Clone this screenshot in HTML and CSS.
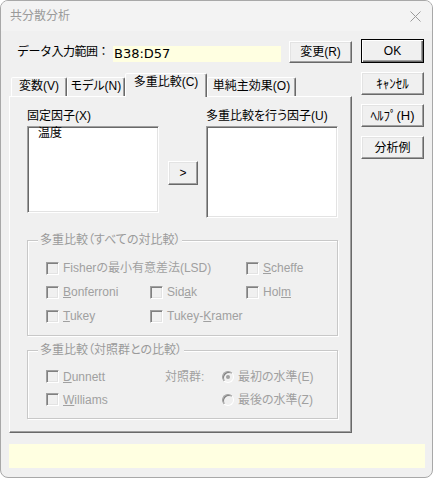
FILE: index.html
```html
<!DOCTYPE html>
<html lang="ja">
<head>
<meta charset="utf-8">
<title>共分散分析</title>
<link rel="stylesheet" href="styles.css">
</head>
<body>
<div class="window">
  <div class="titlebar">
    <span class="title">共分散分析</span>
    <svg class="close" width="11" height="11" viewBox="0 0 11 11"><path d="M0.5 0.5L10.5 10.5M10.5 0.5L0.5 10.5" stroke="#9a9a9a" stroke-width="1"/></svg>
  </div>
  <div class="client">
    <div class="main">
      <div class="datarow">
        <span class="datalabel">データ入力範囲：</span>
        <span class="range">B38:D57</span>
        <button class="btn btn-change">変更(R)</button>
      </div>
      <div class="tabs">
        <div class="tab t1">変数(V)</div>
        <div class="tab t2">モデル(N)</div>
        <div class="tab t3 active">多重比較(C)</div>
        <div class="tab t4">単純主効果(O)</div>
      </div>
      <div class="panel">
        <div class="lists">
          <div class="col">
            <div class="lbl">固定因子(X)</div>
            <div class="listbox lb1"><div class="item">温度</div></div>
          </div>
          <div class="mid"><button class="btn btn-arrow">&gt;</button></div>
          <div class="col">
            <div class="lbl">多重比較を行う因子(U)</div>
            <div class="listbox lb2"></div>
          </div>
        </div>
        <fieldset class="grp grp1">
          <legend>多重比較（すべての対比較）</legend>
          <div class="opts opts1">
            <label class="chk span2"><span class="box"></span><span>Fisherの最小有意差法(LSD)</span></label>
            <label class="chk"><span class="box"></span><span><u>S</u>cheffe</span></label>
            <label class="chk"><span class="box"></span><span><u>B</u>onferroni</span></label>
            <label class="chk"><span class="box"></span><span>Sid<u>a</u>k</span></label>
            <label class="chk"><span class="box"></span><span>Hol<u>m</u></span></label>
            <label class="chk"><span class="box"></span><span><u>T</u>ukey</span></label>
            <label class="chk span2"><span class="box"></span><span>Tukey-<u>K</u>ramer</span></label>
          </div>
        </fieldset>
        <fieldset class="grp grp2">
          <legend>多重比較（対照群との比較）</legend>
          <div class="opts opts2">
            <label class="chk"><span class="box"></span><span><u>D</u>unnett</span></label>
            <span class="dis">対照群:</span>
            <label class="chk"><span class="radio"><span class="dot"></span></span><span>最初の水準(E)</span></label>
            <label class="chk"><span class="box"></span><span><u>W</u>illiams</span></label>
            <span></span>
            <label class="chk"><span class="radio"></span><span>最後の水準(Z)</span></label>
          </div>
        </fieldset>
      </div>
    </div>
    <div class="side">
      <button class="btn btn-ok">OK</button>
      <button class="btn hw">ｷｬﾝｾﾙ</button>
      <button class="btn hw">ﾍﾙﾌﾟ(H)</button>
      <button class="btn">分析例</button>
    </div>
  </div>
  <div class="status"></div>
</div>
</body>
</html>
```

FILE: styles.css
```css
* { box-sizing: border-box; }
html, body { margin: 0; padding: 0; background: #ffffff; }
body {
  font-family: "Liberation Sans", "Noto Sans CJK JP", sans-serif;
  font-size: 12px;
  line-height: 14px;
  color: #000;
  font-feature-settings: "palt";
}
.window {
  width: 433px;
  height: 478px;
  border: 1px solid #a8a8a8;
  border-radius: 8px;
  background: #f0f0f0;
  overflow: hidden;
  display: flex;
  flex-direction: column;
}
.titlebar {
  height: 30px;
  flex: none;
  display: flex;
  align-items: center;
  justify-content: space-between;
  padding: 0 11px 0 9px;
  background: #f3f3f3;
}
.title { color: #9a9a9a; font-size: 12px; }
.close { display: block; }

.client { display: flex; align-items: flex-start; padding-left: 8px; }
.main { width: 343px; padding-top: 10px; flex: none; }
.side {
  width: 63px;
  margin-left: 9px;
  padding-top: 8px;
  display: flex;
  flex-direction: column;
  gap: 9px;
}

.btn {
  font: inherit;
  font-size: 12px;
  line-height: 14px;
  display: flex;
  align-items: center;
  justify-content: center;
  padding: 0;
  margin: 0;
  background: #f0f0f0;
  color: #000;
  border: 1px solid;
  border-color: #fff #696969 #696969 #fff;
  box-shadow: inset -1px -1px #a0a0a0, inset 1px 1px #e3e3e3;
  height: 23px;
  width: 63px;
}
.hw { font-size: 13px; font-feature-settings: normal; }
.btn-ok {
  height: 24px;
  border: 1px solid #000;
  box-shadow: inset 1px 1px #fff, inset -1px -1px #696969, inset -2px -2px #a0a0a0;
}

.datarow { display: flex; align-items: center; height: 22px; }
.datalabel {
  width: 104px;
  flex: none;
  padding-left: 8px;
  white-space: nowrap;
  font-feature-settings: normal;
  letter-spacing: -0.5px;
}
.range {
  width: 168px;
  flex: none;
  height: 16px;
  align-self: flex-end;
  margin-bottom: 1px;
  background: #ffffe1;
  font-family: "DejaVu Sans", sans-serif;
  font-size: 13px;
  line-height: 16px;
  padding-left: 1px;
}
.btn-change { margin-left: 8px; height: 22px; flex: none; }

.tabs {
  display: flex;
  align-items: flex-end;
  padding-left: 2px;
  margin-top: 10px;
  height: 23px;
}
.tab {
  height: 19px;
  border: 1px solid;
  border-bottom: none;
  border-color: #fff #696969 transparent #fff;
  box-shadow: inset -1px 0 #a0a0a0;
  border-radius: 2px 2px 0 0;
  text-align: center;
  line-height: 16px;
  white-space: nowrap;
  background: #f0f0f0;
}
.t1 { width: 56px; }
.t2 { width: 58px; }
.t3 { width: 82px; }
.t4 { width: 89px; }
.active {
  height: 24px;
  margin-bottom: -1px;
  position: relative;
  z-index: 1;
}

.panel {
  height: 337px;
  border: 1px solid;
  border-color: #fff #696969 #696969 #fff;
  box-shadow: inset -1px -1px #a0a0a0;
  padding: 12px 0 0 17px;
}
.lists { display: flex; align-items: flex-start; }
.col { width: 132px; flex: none; }
.lbl { line-height: 14px; margin-bottom: 3px; white-space: nowrap; }
.listbox {
  background: #fff;
  border: 1px solid;
  border-color: #a0a0a0 #fff #fff #a0a0a0;
  box-shadow: inset 1px 1px #696969, inset -1px -1px #e3e3e3;
}
.lb1 { height: 87px; }
.lb2 { height: 92px; }
.item { padding: 0 0 0 10px; line-height: 12px; }
.mid { width: 47px; flex: none; padding: 52px 0 0 9px; }
.btn-arrow { width: 30px; height: 24px; }

.grp {
  margin: 15px 0 0 0;
  width: 311px;
  min-width: 0;
  border: 1px solid #c8c8c8;
  box-shadow: inset 1px 1px #fff, 1px 1px #fff;
  padding: 9px 0 7px 18px;
}
.grp legend {
  padding: 0 2px;
  margin-left: -8px;
  line-height: 14px;
  color: #9a9a9a;
  background: #f0f0f0;
}
.grp2 { margin-top: 7px; padding-top: 8px; }
.opts { display: grid; align-items: center; }
.opts1 { grid-template-columns: 104px 96px auto; grid-auto-rows: 24px; }
.opts2 { grid-template-columns: 119px 57px auto; grid-auto-rows: 23px; }
.span2 { grid-column: span 2; }
.chk {
  display: flex;
  align-items: center;
  gap: 4px;
  color: #a0a0a0;
  white-space: nowrap;
}
.dis { color: #a0a0a0; white-space: nowrap; }
.box {
  width: 13px;
  height: 13px;
  flex: none;
  border: 1px solid;
  border-color: #a0a0a0 #fff #fff #a0a0a0;
  box-shadow: inset 1px 1px #808080, inset -1px -1px #e3e3e3;
  background: #f0f0f0;
}
.radio {
  width: 12px;
  height: 12px;
  flex: none;
  border-radius: 50%;
  border: 1px solid;
  border-color: #a0a0a0 #fff #fff #a0a0a0;
  box-shadow: inset 1px 1px #808080;
  background: #f0f0f0;
  display: flex;
  align-items: center;
  justify-content: center;
}
.dot { width: 4px; height: 4px; border-radius: 50%; background: #a0a0a0; }

.status {
  margin: 11px 0 0 8px;
  width: 416px;
  height: 24px;
  background: #ffffe1;
  flex: none;
}
```
